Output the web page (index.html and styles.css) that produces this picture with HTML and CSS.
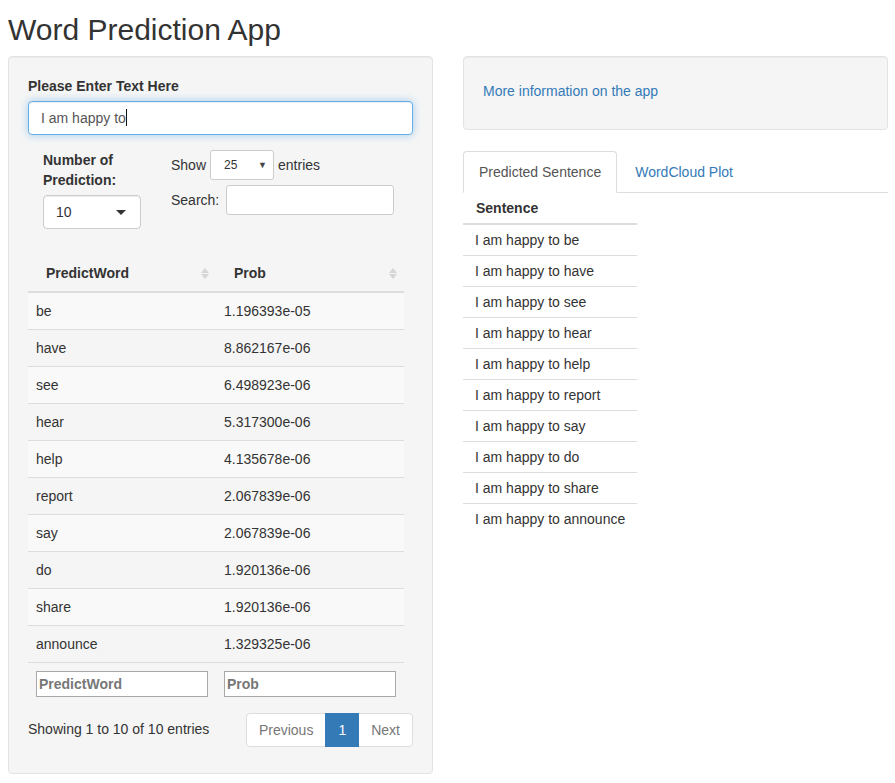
FILE: index.html
```html
<!DOCTYPE html>
<html>
<head>
<meta charset="utf-8">
<title>Word Prediction App</title>
<link rel="stylesheet" href="styles.css">
</head>
<body>
<h2 class="title">Word Prediction App</h2>
<div class="layout">
  <div class="well left">
    <div class="form-group">
      <label class="ctl-label">Please Enter Text Here</label>
      <div class="text-input focused">I am happy to<span class="cursor"></span></div>
    </div>
    <div class="controls-row">
      <div class="num-col">
        <label class="ctl-label">Number of Prediction:</label>
        <div class="selectize"><span>10</span><span class="caret"></span></div>
      </div>
      <div class="dt-top">
        <div class="dt-length">Show <div class="mini-select"><span>25</span><span class="mini-caret">▼</span></div> entries</div>
        <div class="dt-search">Search: <div class="search-box"></div></div>
      </div>
    </div>
    <table class="dt">
      <thead>
        <tr><th>PredictWord<span class="sort"><i class="up"></i><i class="down"></i></span></th><th>Prob<span class="sort"><i class="up"></i><i class="down"></i></span></th></tr>
      </thead>
      <tbody>
        <tr><td>be</td><td>1.196393e-05</td></tr>
        <tr><td>have</td><td>8.862167e-06</td></tr>
        <tr><td>see</td><td>6.498923e-06</td></tr>
        <tr><td>hear</td><td>5.317300e-06</td></tr>
        <tr><td>help</td><td>4.135678e-06</td></tr>
        <tr><td>report</td><td>2.067839e-06</td></tr>
        <tr><td>say</td><td>2.067839e-06</td></tr>
        <tr><td>do</td><td>1.920136e-06</td></tr>
        <tr><td>share</td><td>1.920136e-06</td></tr>
        <tr><td>announce</td><td>1.329325e-06</td></tr>
      </tbody>
      <tfoot>
        <tr><th><input class="filter" type="text" placeholder="PredictWord"></th><th><input class="filter" type="text" placeholder="Prob"></th></tr>
      </tfoot>
    </table>
    <div class="dt-bottom">
      <div class="dt-info">Showing 1 to 10 of 10 entries</div>
      <div class="pagination">
        <span class="pg disabled first">Previous</span><span class="pg active">1</span><span class="pg disabled last">Next</span>
      </div>
    </div>
  </div>
  <div class="right">
    <div class="well info-well"><a href="#" class="link">More information on the app</a></div>
    <ul class="nav-tabs">
      <li class="tab active">Predicted Sentence</li>
      <li class="tab"><a href="#" class="link">WordCloud Plot</a></li>
    </ul>
    <table class="sent">
      <thead><tr><th>Sentence</th></tr></thead>
      <tbody>
        <tr><td>I am happy to be</td></tr>
        <tr><td>I am happy to have</td></tr>
        <tr><td>I am happy to see</td></tr>
        <tr><td>I am happy to hear</td></tr>
        <tr><td>I am happy to help</td></tr>
        <tr><td>I am happy to report</td></tr>
        <tr><td>I am happy to say</td></tr>
        <tr><td>I am happy to do</td></tr>
        <tr><td>I am happy to share</td></tr>
        <tr><td>I am happy to announce</td></tr>
      </tbody>
    </table>
  </div>
</div>
</body>
</html>
```
FILE: styles.css
```css
* { box-sizing: border-box; }
html, body { background: #fff; }
body {
  margin: 0 7px 0 8px;
  font-family: "Liberation Sans", Arial, sans-serif;
  font-size: 14px;
  line-height: 20px;
  color: #333;
}
.title {
  margin: 13px 0 10px;
  font-size: 30px;
  line-height: 33px;
  font-weight: 500;
}
.layout {
  display: grid;
  grid-template-columns: 425px 425px;
  column-gap: 30px;
  align-items: start;
}
.well {
  background: #f5f5f5;
  border: 1px solid #e3e3e3;
  border-radius: 4px;
  box-shadow: inset 0 1px 1px rgba(0,0,0,.05);
}
.left { padding: 19px 19px 19px; }
.form-group { margin-bottom: 15px; }
.ctl-label {
  display: block;
  font-weight: bold;
  margin-bottom: 5px;
}
.text-input {
  height: 34px;
  padding: 6px 12px;
  background: #fff;
  border: 1px solid #ccc;
  border-radius: 4px;
  color: #555;
}
.text-input.focused {
  border-color: #66afe9;
  box-shadow: inset 0 1px 1px rgba(0,0,0,.075), 0 0 8px rgba(102,175,233,.6);
}
.cursor {
  display: inline-block;
  width: 1px;
  height: 17px;
  background: #111;
  vertical-align: -3px;
}
.controls-row {
  display: flex;
  align-items: flex-start;
  padding-left: 15px;
  margin-bottom: 26px;
}
.num-col { width: 98px; }
.selectize {
  display: flex;
  align-items: center;
  justify-content: space-between;
  height: 34px;
  padding: 0 14px 0 12px;
  background: #fff;
  border: 1px solid #ccc;
  border-radius: 4px;
  box-shadow: inset 0 1px 1px rgba(0,0,0,.075);
}
.caret {
  width: 0; height: 0;
  border-left: 5px solid transparent;
  border-right: 5px solid transparent;
  border-top: 5px solid #333;
}
.dt-top { margin-left: 30px; }
.dt-length, .dt-search {
  display: flex;
  align-items: center;
  gap: 4px;
}
.mini-select {
  display: flex;
  align-items: center;
  justify-content: space-between;
  width: 64px;
  height: 30px;
  padding: 0 6px 0 13px;
  background: #fff;
  border: 1px solid #ccc;
  border-radius: 3px;
  font-size: 12px;
}
.mini-caret { font-size: 9px; color: #444; }
.dt-search { margin-top: 5px; }
.search-box {
  width: 168px;
  height: 30px;
  margin-left: 3px;
  background: #fff;
  border: 1px solid #ccc;
  border-radius: 3px;
}
table { border-collapse: collapse; border-spacing: 0; }
.dt { width: 376px; table-layout: fixed; }
.dt th, .dt td { text-align: left; }
.dt thead th {
  position: relative;
  padding: 8px 30px 8px 18px;
  font-weight: bold;
  border-bottom: 2px solid #ddd;
}
.sort {
  position: absolute;
  right: 7px;
  top: 13px;
  display: flex;
  flex-direction: column;
  gap: 1px;
}
.sort i {
  display: block;
  width: 0; height: 0;
  border-left: 4px solid transparent;
  border-right: 4px solid transparent;
}
.sort .up { border-bottom: 5px solid #d6d6d6; }
.sort .down { border-top: 5px solid #d6d6d6; }
.dt tbody td {
  padding: 8px;
  border-top: 1px solid #ddd;
}
.dt tbody tr:first-child td { border-top: 0; }
.dt tbody tr:nth-child(odd) td { background: #f9f9f9; }
.dt tfoot th {
  padding: 8px;
  border-top: 1px solid #ddd;
}
.filter {
  display: block;
  width: 172px;
  height: 26px;
  margin: 0;
  padding: 1px 2px;
  border: 1px solid #a9a9a9;
  border-radius: 0;
  background: #fff;
  font: bold 14px "Liberation Sans", Arial, sans-serif;
  color: #555;
}
.filter::placeholder { color: #777; opacity: 1; font-weight: bold; }
.dt-bottom {
  display: flex;
  justify-content: space-between;
  align-items: flex-start;
  padding-top: 6px;
  padding-bottom: 5px;
}
.dt-info { padding-top: 8px; }
.pagination {
  display: flex;
  margin: 2px 0;
}
.pg {
  display: block;
  padding: 6px 12px;
  line-height: 20px;
  height: 34px;
  background: #fff;
  border: 1px solid #ddd;
  margin-left: -1px;
  color: #777;
}
.pg.first { margin-left: 0; border-radius: 4px 0 0 4px; }
.pg.last { border-radius: 0 4px 4px 0; }
.pg.active {
  background: #337ab7;
  border-color: #337ab7;
  color: #fff;
  position: relative;
  padding: 6px 12px;
}
.link { color: #337ab7; text-decoration: none; }
.info-well {
  padding: 24px 19px 28px;
  margin-bottom: 21px;
}
.nav-tabs {
  display: flex;
  list-style: none;
  margin: 0;
  padding: 0;
  border-bottom: 1px solid #ddd;
}
.tab {
  padding: 10px 15px;
  line-height: 20px;
  margin-right: 2px;
  margin-bottom: -1px;
  border: 1px solid transparent;
  border-radius: 4px 4px 0 0;
}
.tab.active {
  color: #555;
  background: #fff;
  border-color: #ddd;
  border-bottom-color: transparent;
}
.sent th, .sent td { text-align: left; }
.sent th {
  padding: 5px 12px 5px 13px;
  border-bottom: 2px solid #ddd;
  font-weight: bold;
}
.sent td {
  padding: 5px 12px;
  border-top: 1px solid #ddd;
}
.sent tbody tr:first-child td { border-top: 0; }
```
